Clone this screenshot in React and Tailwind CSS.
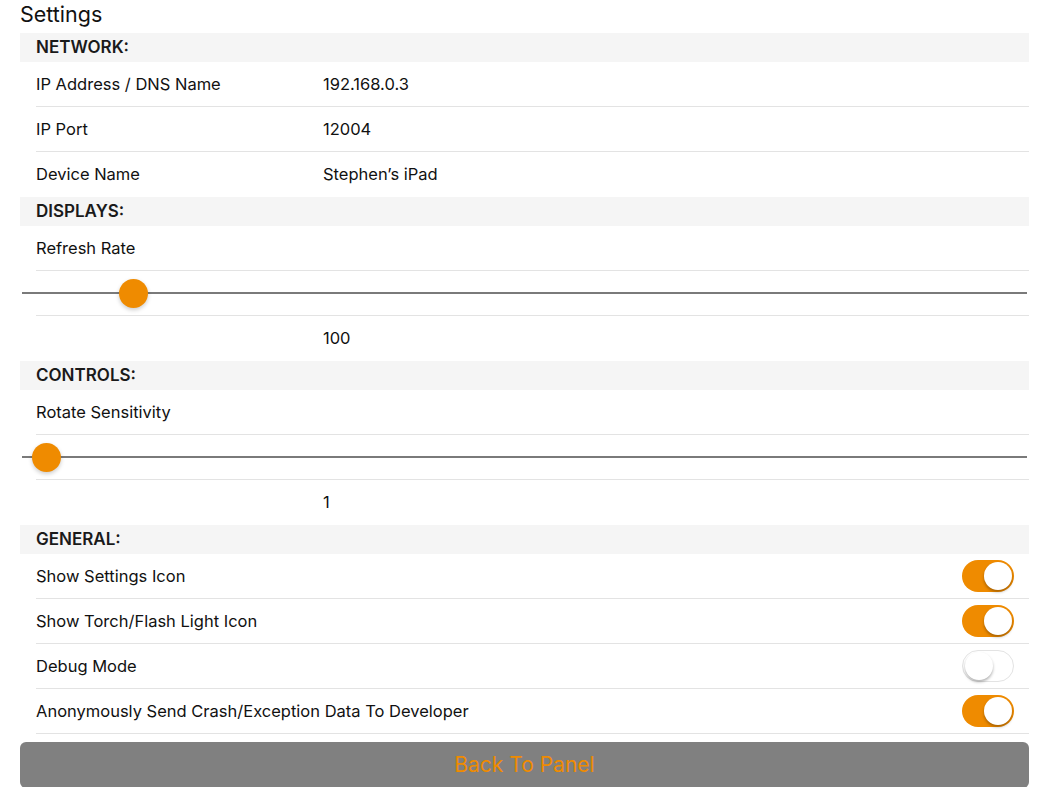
const font = { fontFamily: "Inter, 'Liberation Sans', sans-serif" };

function Header({ children }) {
  return (
    <div className="h-[29px] bg-[#f5f5f5] pl-4 flex items-center text-[17px] font-semibold text-[#1a1a1a]">
      {children}
    </div>
  );
}

function Row({ label, value, sep = true, children }) {
  return (
    <div className="pl-4">
      <div className={`h-[45px] flex items-center text-[16.5px] text-[#111] ${sep ? "border-b border-[#e3e3e3]" : ""}`}>
        <div className="min-w-[287px] whitespace-nowrap">{label}</div>
        {value ? <div>{value}</div> : null}
        <div className="flex-1" />
        {children}
      </div>
    </div>
  );
}

function Slider({ pos }) {
  return (
    <div>
      <div className="h-[44px] flex items-center">
        <div className="relative w-full h-[2px] mx-[2px] bg-[#7a7a7a]">
          <div
            className="absolute top-1/2 w-[29px] h-[29px] -mt-[14.5px] -ml-[14.5px] rounded-full bg-[#ef8b00] shadow-[0_2px_4px_rgba(0,0,0,0.2)]"
            style={{ left: pos }}
          />
        </div>
      </div>
      <div className="ml-4 border-t border-[#e3e3e3]" />
    </div>
  );
}

function Toggle({ on }) {
  return (
    <div
      className={`mr-[15px] w-[52px] h-[32px] rounded-full flex items-center p-[2px] ${
        on ? "bg-[#ef8b00] justify-end" : "bg-white border border-[#e3e3e3] justify-start"
      }`}
    >
      <div className="w-[28px] h-[28px] rounded-full bg-white shadow-[0_2px_3px_rgba(0,0,0,0.3)]" />
    </div>
  );
}

export default function App() {
  return (
    <div className="w-[1049px] h-[787px] bg-white overflow-hidden" style={font}>
      <div className="h-[33px] pl-5 pb-[4px] flex items-center text-[21.5px] text-[#111]">Settings</div>
      <div className="mx-5">
        <Header>NETWORK:</Header>
        <Row label="IP Address / DNS Name" value="192.168.0.3" />
        <Row label="IP Port" value="12004" />
        <Row label="Device Name" value="Stephen’s iPad" sep={false} />
        <Header>DISPLAYS:</Header>
        <Row label="Refresh Rate" />
        <Slider pos="111px" />
        <Row label="" value="100" sep={false} />
        <Header>CONTROLS:</Header>
        <Row label="Rotate Sensitivity" />
        <Slider pos="24px" />
        <Row label="" value="1" sep={false} />
        <Header>GENERAL:</Header>
        <Row label="Show Settings Icon"><Toggle on /></Row>
        <Row label="Show Torch/Flash Light Icon"><Toggle on /></Row>
        <Row label="Debug Mode"><Toggle on={false} /></Row>
        <Row label="Anonymously Send Crash/Exception Data To Developer"><Toggle on /></Row>
        <div className="mt-[8px] h-[46px] rounded-[6px] bg-[#808080] flex items-center justify-center text-[21px] text-[#ef8b00]">
          Back To Panel
        </div>
      </div>
    </div>
  );
}
